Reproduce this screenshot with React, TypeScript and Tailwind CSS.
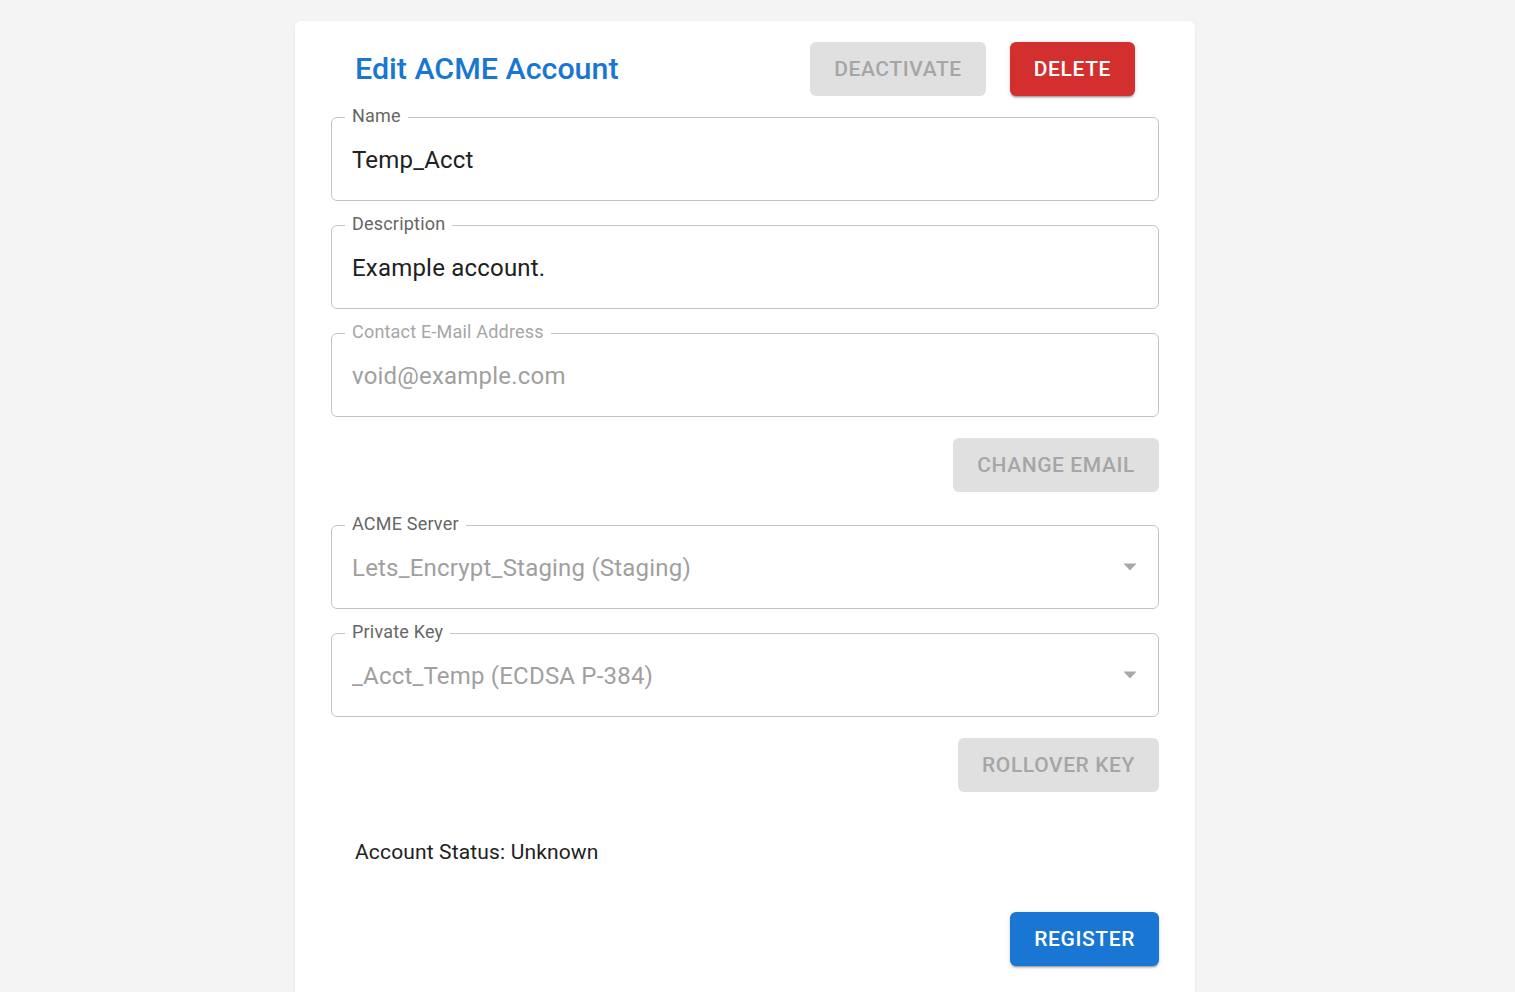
import React from "react";

function Field({
  label,
  value,
  labelMuted,
  select,
}: {
  label: string;
  value: string;
  labelMuted?: boolean;
  select?: boolean;
}) {
  return (
    <div className="relative h-[84px] rounded-[6px] border border-[#c4c4c4]">
      <span
        className={`absolute left-[13px] top-[-13px] bg-white px-[7px] text-[18px] leading-[22px] tracking-[0.2px] ${
          labelMuted ? "text-[#a6a6a6]" : "text-[#666666]"
        }`}
      >
        {label}
      </span>
      <div className="flex h-full items-center pl-[20px] pr-[21px] pt-[1px]">
        <span
          className={`flex-1 text-[24px] tracking-[0.2px] ${
            select || labelMuted ? "text-[#a0a0a0]" : "text-[#212121]"
          }`}
        >
          {value}
        </span>
        {select && (
          <svg width="14" height="8" viewBox="0 0 14 8" className="-mt-[1px]">
            <path d="M0.5 0.5 L13.5 0.5 L7 7.5 Z" fill="#a8a8a8" />
          </svg>
        )}
      </div>
    </div>
  );
}

function GrayButton({ children }: { children: React.ReactNode }) {
  return (
    <div className="flex h-[54px] items-center rounded-[6px] bg-[#e0e0e0] px-[24px] pt-[2px] text-[21px] font-medium tracking-[0.6px] text-[#a6a6a6]">
      {children}
    </div>
  );
}

const raised =
  "shadow-[0_3px_1px_-2px_rgba(0,0,0,0.2),0_2px_2px_0_rgba(0,0,0,0.14),0_1px_5px_0_rgba(0,0,0,0.12)]";

export default function App() {
  return (
    <div
      className="min-h-[992px] bg-[#f4f4f4] pt-[21px]"
      style={{ fontFamily: "Roboto, 'Liberation Sans', sans-serif" }}
    >
      <div className="ml-[295px] min-h-[1000px] w-[900px] rounded-t-[6px] bg-white px-[36px] pt-[21px] shadow-[0_1px_3px_rgba(0,0,0,0.08)]">
        <div className="flex h-[54px] items-center px-[24px]">
          <h1 className="flex-1 text-[30.4px] font-medium text-[#1976d2]">
            Edit ACME Account
          </h1>
          <GrayButton>DEACTIVATE</GrayButton>
          <div
            className={`ml-[24px] flex h-[54px] items-center rounded-[6px] bg-[#d32f2f] px-[24px] pt-[2px] text-[21px] font-medium tracking-[0.6px] text-white ${raised}`}
          >
            DELETE
          </div>
        </div>
        <div className="mt-[21px] flex flex-col gap-[24px]">
          <Field label="Name" value="Temp_Acct" />
          <Field label="Description" value="Example account." />
          <Field label="Contact E-Mail Address" value="void@example.com" labelMuted />
        </div>
        <div className="mt-[21px] flex justify-end">
          <GrayButton>CHANGE EMAIL</GrayButton>
        </div>
        <div className="mt-[33px] flex flex-col gap-[24px]">
          <Field label="ACME Server" value="Lets_Encrypt_Staging (Staging)" select />
          <Field label="Private Key" value="_Acct_Temp (ECDSA P-384)" select />
        </div>
        <div className="mt-[21px] flex justify-end">
          <GrayButton>ROLLOVER KEY</GrayButton>
        </div>
        <div className="mt-[45px] px-[24px] text-[21px] leading-[30px] tracking-[0.15px] text-[#212121]">
          Account Status: Unknown
        </div>
        <div className="mt-[45px] flex justify-end">
          <div
            className={`flex h-[54px] items-center rounded-[6px] bg-[#1976d2] px-[24px] pt-[2px] text-[21px] font-medium tracking-[0.6px] text-white ${raised}`}
          >
            REGISTER
          </div>
        </div>
      </div>
    </div>
  );
}
